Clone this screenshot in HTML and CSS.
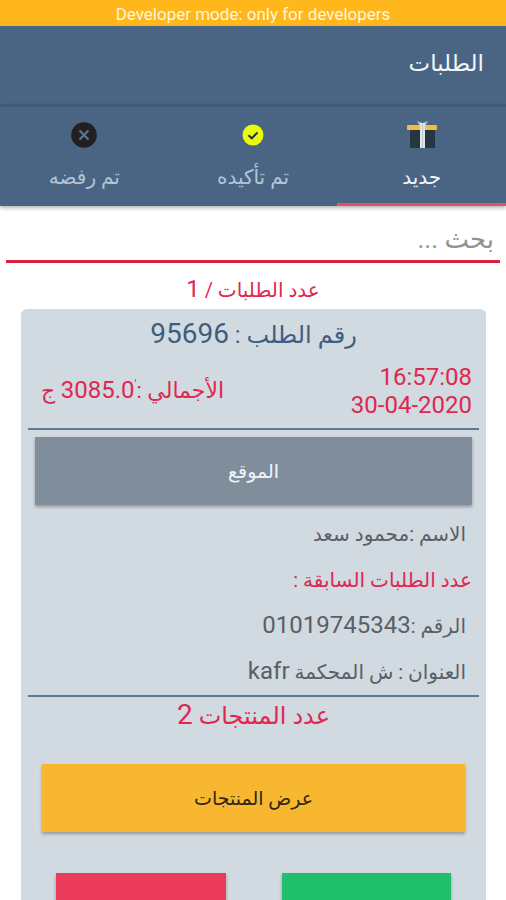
FILE: index.html
```html
<!DOCTYPE html>
<html lang="ar" dir="rtl">
<head>
<meta charset="utf-8">
<meta name="viewport" content="width=device-width, initial-scale=1">
<title>الطلبات</title>
<link rel="stylesheet" href="styles.css">
</head>
<body>
<div class="dev-banner" dir="ltr">Developer mode: only for developers</div>
<header class="app-bar"><h1>الطلبات</h1></header>
<nav class="tabs">
  <a class="tab active" href="#new">
    <svg class="tab-icon gift" viewBox="0 0 30 28" aria-hidden="true">
      <rect x="3" y="6" width="25" height="21" rx="1" fill="#263640"/>
      <rect x="0" y="4" width="30" height="5" rx="1" fill="#f6bb42"/>
      <path d="M10 0 15.500 2 21 0 18.500 5H12.500Z" fill="#a9bccb"/>
      <rect x="13" y="2" width="5" height="25" fill="#dfe5ea"/>
      <rect x="15" y="2" width="1" height="25" fill="#bcc8d2"/>
    </svg>
    <span>جديد</span>
  </a>
  <a class="tab" href="#confirmed">
    <svg class="tab-icon" viewBox="0 0 28 28" aria-hidden="true">
      <circle cx="14" cy="14" r="10.500" fill="#e9fb0b"/>
      <path d="M9.500 14.200 12.800 17.300 18.500 11.500" fill="none" stroke="#263238" stroke-width="2"/>
    </svg>
    <span>تم تأكيده</span>
  </a>
  <a class="tab" href="#rejected">
    <svg class="tab-icon" viewBox="0 0 28 28" aria-hidden="true">
      <circle cx="14" cy="14" r="12.800" fill="#231f20"/>
      <path d="m9.500 9.500 9 9m0-9-9 9" fill="none" stroke="#5d7590" stroke-width="2.200"/>
    </svg>
    <span>تم رفضه</span>
  </a>
</nav>
<main>
  <input class="search" type="search" placeholder="بحث ..." aria-label="بحث">
  <p class="order-count">عدد الطلبات / <span class="latin">1</span></p>
  <article class="card">
    <h2>رقم الطلب : <span class="latin">95696</span></h2>
    <div class="summary">
      <time datetime="2020-04-30T16:57:08"><span>16:57:08</span><span>30-04-2020</span></time>
      <p class="total">الأجمالي :<bdi class="latin">3085.0<sup>'</sup></bdi> ج</p>
    </div>
    <section class="customer">
      <button class="btn location" type="button">الموقع</button>
      <p>الاسم :محمود سعد</p>
      <p class="previous">عدد الطلبات السابقة :</p>
      <p>الرقم :<span class="latin">01019745343</span></p>
      <p>العنوان : ش المحكمة <span class="latin">kafr</span></p>
    </section>
    <h3>عدد المنتجات <span class="latin">2</span></h3>
    <button class="btn products" type="button">عرض المنتجات</button>
    <div class="actions">
      <button class="btn accept" type="button">تم الطلب</button>
      <button class="btn reject" type="button">رفض</button>
    </div>
  </article>
</main>
</body>
</html>
```

FILE: styles.css
```css
* { box-sizing: border-box; }
html { scrollbar-width: none; }
body {
  margin: 0;
  background: #fff;
  color: #5b5f66;
  font-family: Roboto, "DejaVu Sans", sans-serif;
  font-size: 20px;
}
h1, h2, h3, p { margin: 0; font-weight: 400; }
.latin { font-size: 24px; line-height: 1; }
.dev-banner {
  height: 26px;
  background: #ffb71c;
  color: #fff6dc;
  font-size: 17px;
  line-height: 28px;
  text-align: center;
}
.app-bar {
  height: 78px;
  padding: 0 22px;
  background: #4a6583;
  color: #f1f6fb;
}
.app-bar h1 { font-size: 23px; line-height: 76px; }
.tabs {
  display: flex;
  height: 102px;
  background: #4a6583;
  border-top: 3px solid #3f5a77;
  box-shadow: 0 2px 4px rgba(0, 0, 0, .3);
}
.tab {
  flex: 1;
  display: flex;
  flex-direction: column;
  align-items: center;
  gap: 12px;
  padding-top: 14px;
  border-bottom: 3px solid transparent;
  color: #b3c4d7;
  font-size: 20px;
  line-height: 32px;
  text-decoration: none;
}
.tab.active { color: #f1f6fb; border-color: #e4506a; }
.tab-icon { width: 28px; height: 28px; }
.gift { width: 30px; }
.search {
  display: block;
  width: calc(100% - 12px);
  height: 54px;
  margin: 3px 6px 0;
  padding: 8px 6px 0;
  border: 0;
  border-bottom: 3px solid #d9213f;
  background: none;
  outline: 0;
  font: inherit;
  font-size: 26px;
}
.search::placeholder { color: #929292; opacity: 1; }
.order-count, .previous, .summary, h3 { color: #df2850; }
.order-count { padding-top: 8px; line-height: 38px; text-align: center; }
.card {
  margin: 0 20px 0 21px;
  padding: 0 7px 24px;
  border-radius: 6px;
  background: #d1d9e1;
}
h2, h3 { font-size: 24px; text-align: center; }
h2 .latin, h3 .latin { font-size: 28px; }
h2 { color: #3f5d7e; line-height: 52px; }
h3 { line-height: 38px; }
.summary {
  display: flex;
  justify-content: space-between;
  align-items: center;
  height: 69px;
  padding: 0 7px 8px 13px;
  border-bottom: 2px solid #607894;
}
.summary time { display: grid; font-size: 24px; line-height: 28px; }
.total { font-size: 22px; line-height: 28px; }
.total sup { font-size: 12px; line-height: 0; }
.btn {
  height: 68px;
  padding: 0;
  border: 0;
  box-shadow: 0 2px 3px rgba(0, 0, 0, .3);
  color: #30270f;
  font: inherit;
  font-size: 19px;
}
.customer {
  padding: 7px 7px 0;
  border-bottom: 2px solid #607894;
}
.customer p { padding: 0 6px; line-height: 46px; }
.customer .previous { padding: 0; }
.location {
  display: block;
  width: 100%;
  margin-bottom: 6px;
  background: #808e9b;
  color: #f1f6fb;
}
.products {
  display: block;
  width: calc(100% - 28px);
  margin: 29px 14px 0;
  background: #f7b731;
}
.actions {
  display: flex;
  gap: 56px;
  padding: 41px 28px 0;
}
.actions .btn { flex: 1; }
.accept { background: #20bf6b; }
.reject { background: #eb3b5a; }
```
